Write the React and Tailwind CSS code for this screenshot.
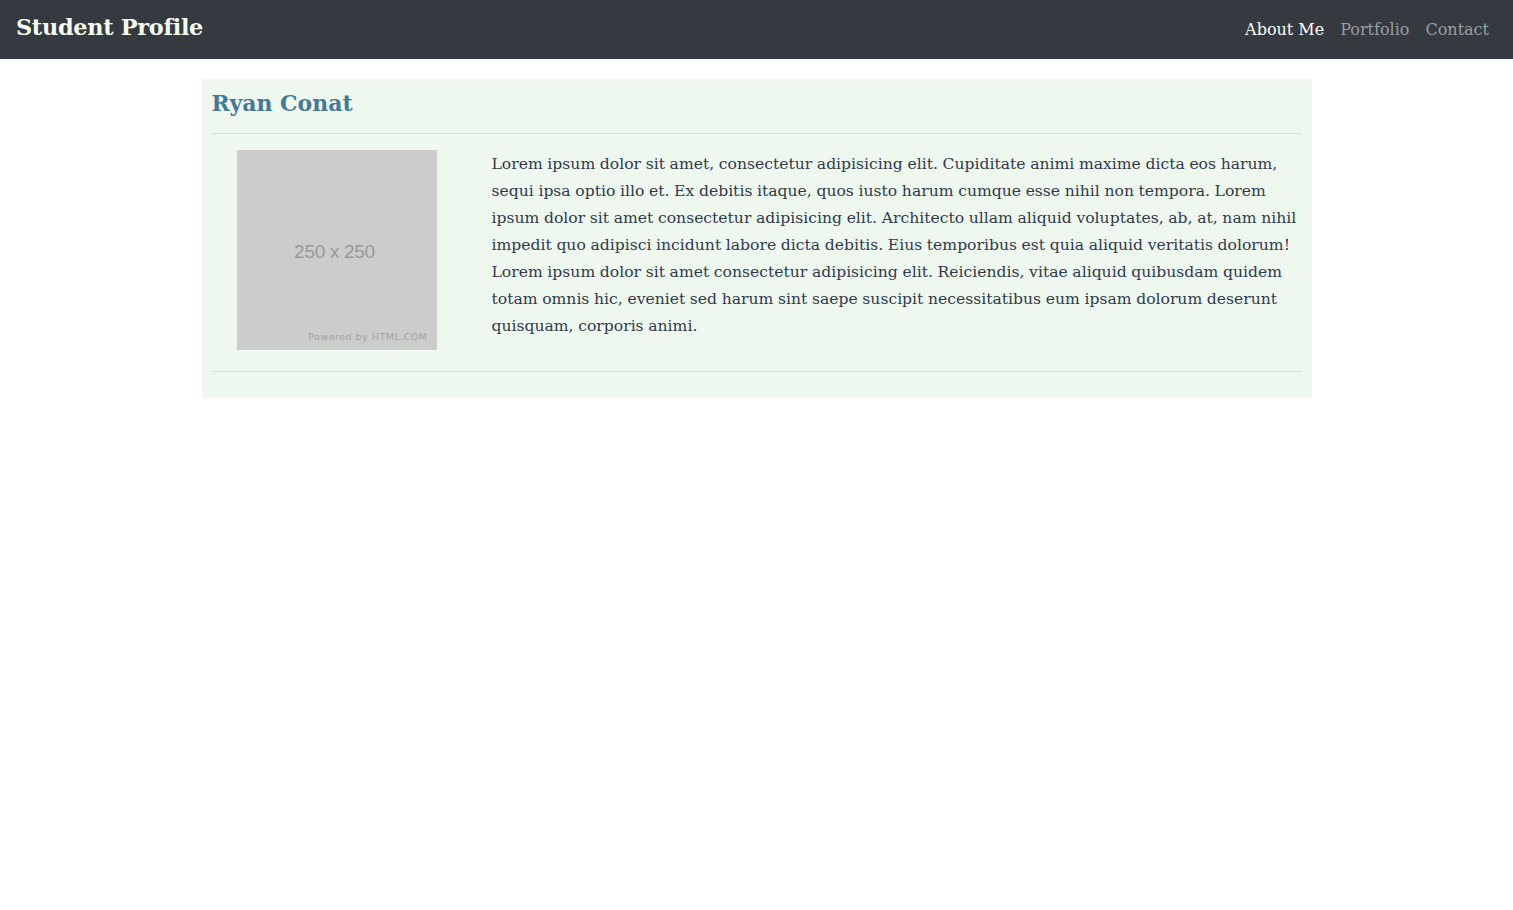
import React from "react";

const serif = "font-['DejaVu_Serif','Liberation_Serif',serif]";

const Placeholder = () => (
  <div className="relative w-[200px] h-[200px] bg-[#cccccc] flex items-center justify-center font-['Liberation_Sans',Arial,sans-serif]">
    <span className="text-[19px] text-[#999999] mt-[4px] ml-[-4px] tracking-[-0.3px]">250 x 250</span>
    <span className="absolute right-[9px] bottom-[6px] tracking-[0.5px] text-[#a3a3a3] font-['DejaVu_Sans',sans-serif] text-[9.5px]">
      Powered by HTML.COM
    </span>
  </div>
);

export default function App() {
  return (
    <div className={`min-h-screen bg-white ${serif}`}>
      <nav className="h-[59px] bg-[#343a40] flex items-center justify-between pl-4 pr-6">
        <span className="text-[22.4px] font-bold text-[#f4fbf0] tracking-[-0.3px] -mt-[3px]">Student Profile</span>
        <div className="flex gap-4 text-[16px] mt-[1px]">
          <a className="text-white">About Me</a>
          <a className="text-[#9a9da1]">Portfolio</a>
          <a className="text-[#9a9da1]">Contact</a>
        </div>
      </nav>
      <main className="pt-5">
        <section className="mx-auto w-[1110px] bg-[#eff8ee] px-[10px] pt-[10px] pb-[26px]">
          <h1 className="text-[22px] font-bold text-[#44789a] leading-[28px]">Ryan Conat</h1>
          <div className="mt-[16px] border-t border-[#d9e0d8]" />
          <div className="flex pt-4">
            <div className="w-[280px] shrink-0 pl-[25px]">
              <Placeholder />
            </div>
            <p className="text-[15.6px] leading-[27px] text-[#2f3a4c] mt-[1px] [word-spacing:-0.3px]">
              Lorem ipsum dolor sit amet, consectetur adipisicing elit. Cupiditate animi maxime dicta eos harum, sequi ipsa optio illo et. Ex debitis itaque, quos iusto harum cumque esse nihil non tempora. Lorem ipsum dolor sit amet consectetur adipisicing elit. Architecto ullam aliquid voluptates, ab, at, nam nihil impedit quo adipisci incidunt labore dicta debitis. Eius temporibus est quia aliquid veritatis dolorum! Lorem ipsum dolor sit amet consectetur adipisicing elit. Reiciendis, vitae aliquid quibusdam quidem totam omnis hic, eveniet sed harum sint saepe suscipit necessitatibus eum ipsam dolorum deserunt quisquam, corporis animi.
            </p>
          </div>
          <div className="mt-[21px] border-t border-[#d9e0d8]" />
        </section>
      </main>
    </div>
  );
}
